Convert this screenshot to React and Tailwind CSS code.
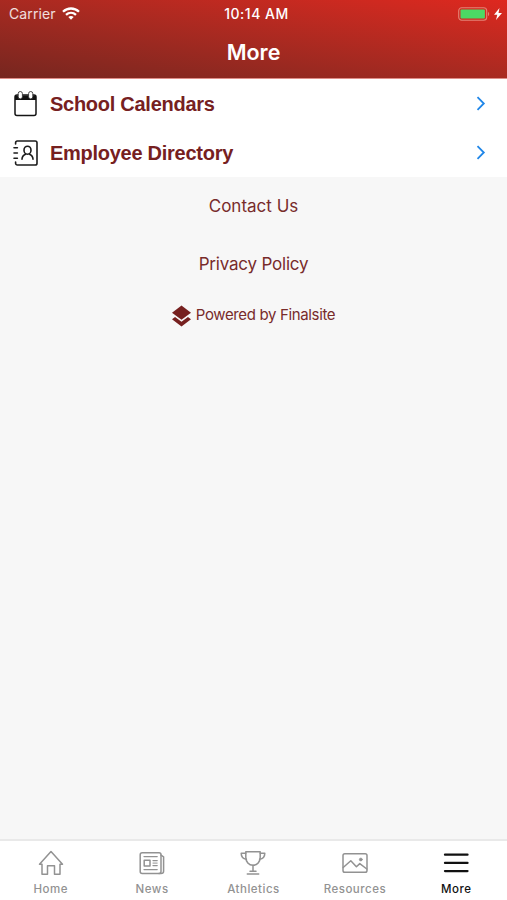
import React from "react";

const CalendarIcon = () => (
  <svg width="26" height="26" viewBox="0 0 26 26" fill="none">
    <rect x="2" y="4" width="21" height="20.5" rx="2" stroke="#151515" strokeWidth="1.5" />
    <path d="M2 4.5h21V9H2z" fill="#111" />
    <rect x="5.2" y="0.5" width="4.2" height="7.4" rx="2.1" fill="#fff" stroke="#333" strokeWidth="0.9" />
    <rect x="15.6" y="0.5" width="4.2" height="7.4" rx="2.1" fill="#fff" stroke="#333" strokeWidth="0.9" />
  </svg>
);

const DirectoryIcon = () => (
  <svg width="26" height="26" viewBox="0 0 26 26" fill="none" stroke="#1c1c1c" strokeWidth="1.6" strokeLinecap="round" strokeLinejoin="round">
    <path d="M2.6 4V2.8C2.6 1.8 3.400 1 4.400 1h17.8c1 0 1.800.8 1.800 1.800v20.400c0 1-.8 1.800-1.800 1.800H4.400c-1 0-1.800-.8-1.800-1.800V22" />
    <path d="M1 7.800h3.400M1 13h3.400M1 18.200h3.400" />
    <ellipse cx="14.500" cy="10.200" rx="3.500" ry="4" />
    <path d="M9 19.300c0-2.700 1.500-4.200 3.500-5.100M20 19.300c0-2.700-1.500-4.200-3.500-5.100" />
  </svg>
);

const HomeIcon = () => (
  <svg width="26" height="26" viewBox="0 0 26 26" fill="none" stroke="currentColor" strokeWidth="1.5" strokeLinejoin="round" strokeLinecap="round">
    <path d="M1.500 14.200 13 1.500l11.500 12.700H22v10h-5.500v-8.500h-7v8.500H4v-10z" />
  </svg>
);

const NewsIcon = () => (
  <svg width="26" height="26" viewBox="0 0 26 26" fill="none" stroke="currentColor" strokeWidth="1.5" strokeLinejoin="round" strokeLinecap="round">
    <rect x="1.200" y="2.700" width="20.800" height="20.800" rx="2" />
    <path d="M22 5.200l2.600 1.600v14.400c0 1.300-1 2.300-2.600 2.300H20" />
    <rect x="5.200" y="10.200" width="5.800" height="5.800" />
    <path d="M5 6.600h13.200M14 10.600h4.200M14 15.600h4.200M5 19.600h13.200" strokeWidth="1.300" />
    <path d="M14 13.100h4.200" strokeWidth="1" />
  </svg>
);

const TrophyIcon = () => (
  <svg width="26" height="26" viewBox="0 0 26 26" fill="none" stroke="currentColor" strokeWidth="1.5" strokeLinejoin="round" strokeLinecap="round">
    <path d="M5.800 1.800h14.400v5.400c0 4.500-3 8-7.200 8s-7.200-3.500-7.200-8z" />
    <path d="M5.800 3.300H1.200c0 3.500 1.600 5.500 5.200 6M20.200 3.300h4.600c0 3.500-1.600 5.500-5.200 6" />
    <path d="M13 15.200v6M10 21.200h6M7.300 24h11.400" />
  </svg>
);

const PictureIcon = () => (
  <svg width="26" height="26" viewBox="0 0 26 26" fill="none" stroke="currentColor" strokeWidth="1.500" strokeLinejoin="round" strokeLinecap="round">
    <rect x="1" y="3.700" width="24" height="18.600" rx="1.800" />
    <path d="M1.200 17.500l7.600-6.700 5.600 6 3.400-3.200 7 5.400" />
    <circle cx="18.800" cy="9.500" r="1.500" fill="currentColor" strokeWidth="0.600" />
  </svg>
);

const MenuIcon = () => (
  <svg width="26" height="26" viewBox="0 0 26 26" fill="none" stroke="currentColor" strokeWidth="2.300" strokeLinecap="round">
    <path d="M2 4.700h22.500M2 12.900h22.500M2 21.100h22.500" />
  </svg>
);

const Chevron = () => (
  <svg width="10" height="15" viewBox="0 0 10 15" fill="none" stroke="#1f86e8" strokeWidth="1.800">
    <path d="M1.500 1.200 7.800 7.500 1.500 13.800" />
  </svg>
);

const rows = [
  { label: "School Calendars", icon: CalendarIcon },
  { label: "Employee Directory", icon: DirectoryIcon },
];

const tabs = [
  { label: "Home", icon: HomeIcon },
  { label: "News", icon: NewsIcon },
  { label: "Athletics", icon: TrophyIcon },
  { label: "Resources", icon: PictureIcon },
  { label: "More", icon: MenuIcon, active: true },
];

const StatusBar = () => (
  <div className="grid grid-cols-[1fr_auto_1fr] items-center h-[27px] pl-[9px] pr-[5px] text-white">
    <div className="flex items-center gap-[6px] text-[14px] tracking-[0.1px] text-white/85">
      Carrier
      <svg width="18" height="13" viewBox="0 0 18 13" fill="none" stroke="#fff" strokeWidth="2.300">
        <path d="M1 4.800c4.500-4.400 11.500-4.400 16 0" />
        <path d="M4 7.900c2.900-2.700 7.100-2.700 10 0" />
        <path d="M9 12.800 6.300 10c1.600-1.400 3.800-1.400 5.400 0z" fill="#fff" stroke="none" />
      </svg>
    </div>
    <div className="text-[14px] font-medium tracking-[0.5px] pl-[2px]">10:14 AM</div>
    <div className="flex items-center justify-end gap-[4px]">
      <svg width="32" height="14" viewBox="0 0 32 14" fill="none">
        <rect x="0.700" y="0.700" width="28" height="12.600" rx="3" stroke="#e38375" strokeWidth="1.100" />
        <rect x="2.500" y="2.500" width="24.400" height="9" rx="1" fill="#4cd964" />
        <path d="M30 5c1.500.4 1.500 3.600 0 4z" fill="#e38375" />
      </svg>
      <svg width="8" height="12" viewBox="0 0 8 12" fill="#fff">
        <path d="M5.500 0 0 6.800h3.300L2 12l6-7H4.500z" />
      </svg>
    </div>
  </div>
);

export default function App() {
  return (
    <div className="flex flex-col w-full h-screen overflow-hidden bg-[#f7f7f7] font-['Inter',sans-serif]">
      <header className="h-[79px] shrink-0 bg-linear-to-tr from-[#76261f] to-[#de281f] border-b border-[#df8d88]">
        <StatusBar />
        <h1 className="text-center text-[21.5px] leading-[50px] font-semibold text-white">More</h1>
      </header>

      <nav className="shrink-0 bg-white">
        {rows.map(({ label, icon: Icon }) => (
          <a key={label} className="flex items-center h-[49px] pl-[13px] pr-[21px]">
            <Icon />
            <span className="flex-1 pl-[11px] text-[20px] font-bold tracking-[-0.27px] text-[#76201f] font-['Liberation_Sans',sans-serif]">
              {label}
            </span>
            <Chevron />
          </a>
        ))}
      </nav>

      <main className="flex-1 flex flex-col items-center pt-px text-[#782b2b]">
        <a className="h-[57px] leading-[57px] text-[17px]">Contact Us</a>
        <a className="h-[57px] leading-[58px] text-[17px] tracking-[-0.2px]">Privacy Policy</a>
        <div className="flex items-center h-[47px] gap-[5px]">
          <svg width="19" height="22" viewBox="0 0 20 22" fill="#76201f">
            <path d="M10 0l10 7.500-10 7.500L0 7.500z" />
            <path d="M0 14.400l3.200-2.400 6.800 5.100 6.800-5.100 3.200 2.400L10 22z" />
          </svg>
          <span className="text-[15px] tracking-[-0.35px]">Powered by Finalsite</span>
        </div>
      </main>

      <footer className="grid grid-cols-5 h-[61px] shrink-0 bg-white border-t-2 border-[#e9e9e9]">
        {tabs.map(({ label, icon: Icon, active }) => (
          <div
            key={label}
            className={`flex flex-col items-center pt-[9px] ${active ? "text-[#111]" : "text-[#929292]"}`}
          >
            <Icon />
            <span className="mt-[6px] text-[11.5px] leading-[15px] font-medium tracking-[0.5px]">{label}</span>
          </div>
        ))}
      </footer>
    </div>
  );
}
